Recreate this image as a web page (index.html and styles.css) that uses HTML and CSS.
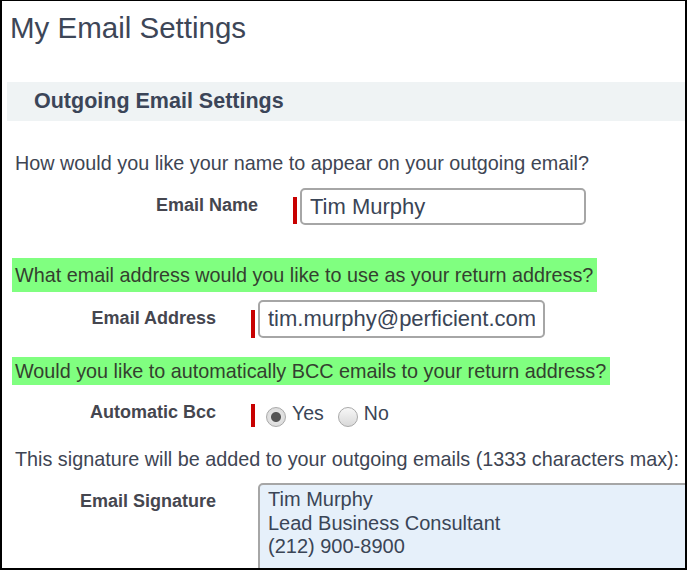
FILE: index.html
```html
<!DOCTYPE html>
<html lang="en">
<head>
    <meta charset="UTF-8">
    <title>My Email Settings</title>
    <link rel="stylesheet" href="styles.css">
</head>
<body>
    <div class="page">
        <h1 class="page-title">My Email Settings</h1>

        <h2 class="section-head">Outgoing Email Settings</h2>

        <p class="question q-name">How would you like your name to appear on your outgoing email?</p>
        <div class="field-row row-name">
            <label class="field-label">Email Name</label>
            <span class="required"></span>
            <input class="text-input" type="text" value="Tim Murphy">
        </div>

        <p class="question hl q-address">What email address would you like to use as your return address?</p>
        <div class="field-row row-address">
            <label class="field-label">Email Address</label>
            <span class="required"></span>
            <input class="text-input" type="text" value="tim.murphy@perficient.com">
        </div>

        <p class="question hl q-bcc">Would you like to automatically BCC emails to your return address?</p>
        <div class="field-row row-bcc">
            <label class="field-label">Automatic Bcc</label>
            <span class="required"></span>
            <label class="radio"><input type="radio" name="bcc" checked> Yes</label>
            <label class="radio"><input type="radio" name="bcc"> No</label>
        </div>

        <p class="question q-signature">This signature will be added to your outgoing emails (1333 characters max):</p>
        <div class="field-row row-signature">
            <label class="field-label">Email Signature</label>
            <span class="required blank"></span>
            <textarea class="signature">Tim Murphy
Lead Business Consultant
(212) 900-8900</textarea>
        </div>
    </div>
</body>
</html>
```

FILE: styles.css
```css
/* base */
body {
    margin: 0;
    font-family: "Liberation Sans", Arial, sans-serif;
    color: #3e4553;
    background: #fff;
}

.page {
    height: 570px;
    box-sizing: border-box;
    border: solid #000;
    border-width: 1px 2px 2px 2px;
    overflow: hidden;
}

.page-title {
    margin: 10px 0 0;
    padding-left: 8px;
    font-size: 29.5px;
    line-height: 34px;
    font-weight: normal;
    color: #3d4657;
}

.section-head {
    margin: 37px 0 0 5px;
    padding-left: 27px;
    height: 39px;
    line-height: 39px;
    font-size: 21.5px;
    font-weight: bold;
    color: #3b4558;
    background: #eff3f4;
}

.question {
    margin: 0 0 0 13px;
    font-size: 19.8px;
    line-height: 23px;
    white-space: nowrap;
}

.q-name {
    margin-top: 31px;
}

/* highlighted questions */
.hl {
    width: fit-content;
    margin-left: 10px;
    background: #80ff80;
    color: #34402f;
}

.q-address {
    margin-top: 33px;
    padding: 6px 4px 5px 3px;
}

.q-bcc {
    margin-top: 19px;
    padding: 3px 4px 2px 3px;
}

.q-signature {
    margin-top: 21px;
}

/* rows */
.field-row {
    display: flex;
    align-items: flex-start;
}

.field-label {
    flex-shrink: 0;
    width: 214px;
    text-align: right;
    font-size: 18px;
    line-height: 20px;
    font-weight: bold;
    color: #45464f;
}

.required {
    flex-shrink: 0;
    width: 4px;
    margin-left: 35px;
    margin-right: 3px;
    background: #c80000;
}

.required.blank {
    background: transparent;
}

.text-input {
    box-sizing: border-box;
    height: 37px;
    padding: 0 8px;
    border: 2px solid #a6a6a6;
    border-radius: 5px;
    font-family: inherit;
    font-size: 22px;
    color: #3a4556;
    background: #fff;
    outline: none;
}

.row-name {
    margin-top: 13px;
}

.row-name .field-label {
    width: 256px;
    padding-top: 7px;
}

.row-name .required {
    height: 27px;
    margin-top: 9px;
}

.row-name .text-input {
    width: 286px;
}

.row-address {
    margin-top: 8px;
}

.row-address .field-label {
    padding-top: 8px;
}

.row-address .required {
    height: 28px;
    margin-top: 10px;
}

.row-address .text-input {
    width: 287px;
    height: 38px;
}

.row-bcc {
    margin-top: 17px;
}

.row-bcc .required {
    height: 23px;
    margin-top: 2px;
    margin-right: 11px;
}

.radio {
    display: flex;
    align-items: flex-start;
    gap: 6px;
    margin-right: 14px;
    font-size: 19.5px;
    line-height: 22px;
    color: #3a4556;
}

.radio input {
    appearance: none;
    width: 20px;
    height: 20px;
    margin: 5px 0 0;
    border: 1px solid #a9a9a9;
    border-radius: 50%;
    background: linear-gradient(#f7f7f7, #d9d9d9);
}

.radio input:checked {
    background: radial-gradient(circle, #555 0 4.5px, #e3e3e3 5.5px, #d6d6d6 100%);
}

.row-signature {
    margin-top: 12px;
}

.row-signature .field-label {
    padding-top: 8px;
}

.signature {
    box-sizing: border-box;
    width: 480px;
    height: 120px;
    flex-shrink: 0;
    padding: 3px 8px;
    border: 2px solid #a6a6a6;
    border-radius: 5px;
    font-family: inherit;
    font-size: 20px;
    line-height: 23.5px;
    color: #3a4556;
    background: #e6f0fa;
    resize: none;
    overflow: hidden;
}
```
